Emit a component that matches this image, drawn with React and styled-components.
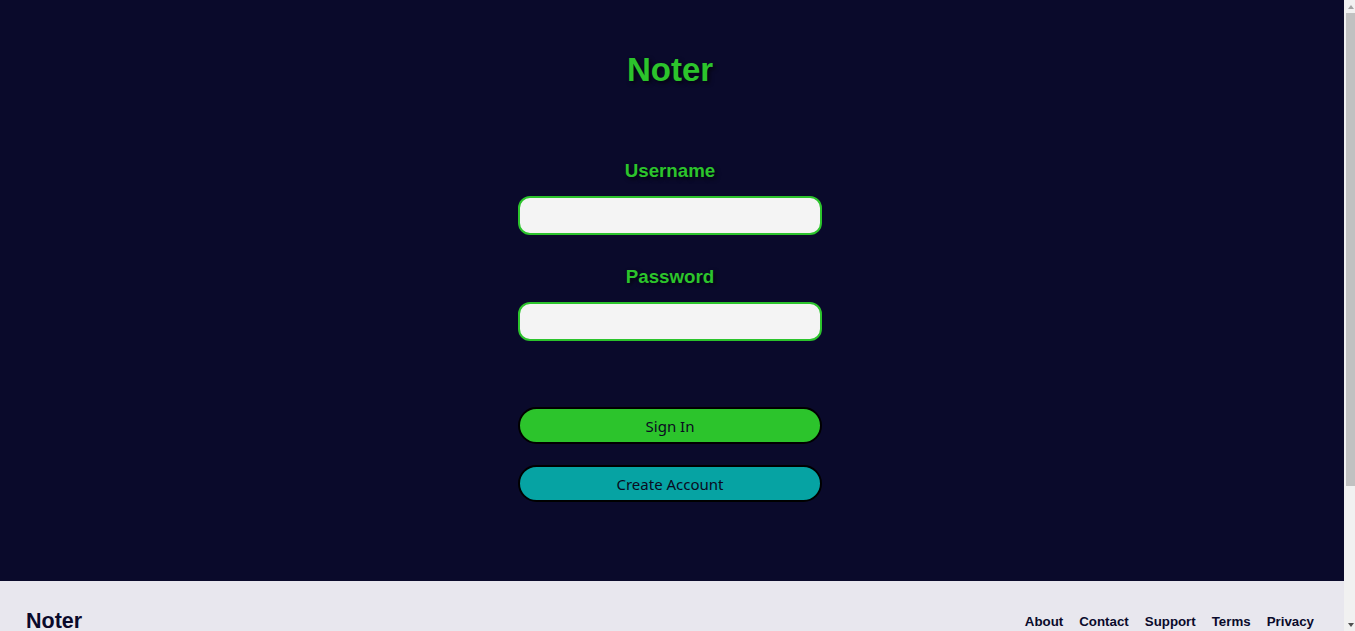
import styled, { createGlobalStyle } from "styled-components";

const GlobalStyle = createGlobalStyle`
  body {
    margin: 0;
    background-color: #0a0a2b;
    font-family: "Liberation Sans", Arial, sans-serif;
  }
`;

const Page = styled.div`
  display: flex;
  flex-direction: column;
  margin-right: 11px;
`;

const Main = styled.main`
  height: 581px;
  box-sizing: border-box;
  padding: 50px 4px 0 0;
  display: flex;
  flex-direction: column;
  align-items: center;
  background-color: #0a0a2b;
`;

const Title = styled.h1`
  margin: 0;
  font-size: 33px;
  line-height: 40px;
  color: #2cc42c;
  text-shadow: 2px 2px 4px rgba(0, 0, 0, 0.7);
`;

const Form = styled.form`
  display: flex;
  flex-direction: column;
  align-items: center;
  margin-top: 70px;
`;

const Field = styled.div`
  display: flex;
  flex-direction: column;
  align-items: center;
  gap: 14px;
  margin-bottom: ${(props) => props.$after || 0}px;
`;

const Label = styled.label`
  font-size: 18.72px;
  font-weight: bold;
  line-height: 22px;
  color: #2cc42c;
  text-shadow: 2px 2px 4px rgba(0, 0, 0, 0.7);
`;

const Input = styled.input`
  width: 304px;
  height: 39px;
  box-sizing: border-box;
  border: 2px solid #2cc42c;
  border-radius: 12px;
  background-color: #f4f4f4;
  padding: 0 12px;
  font-size: 16px;
  outline: none;
`;

const Button = styled.button`
  width: 304px;
  height: 37px;
  box-sizing: border-box;
  border: 2px solid #000;
  border-radius: 20px;
  background-color: ${(props) => props.$bg};
  color: #0a0a20;
  font-family: "Noto Sans", sans-serif;
  font-size: 15px;
  cursor: pointer;
  margin-bottom: ${(props) => props.$after || 0}px;
`;

const Footer = styled.footer`
  display: flex;
  justify-content: space-between;
  align-items: flex-start;
  background-color: #e8e7ee;
  padding: 28px 30px 175px 26px;
`;

const Brand = styled.h2`
  margin: 0;
  font-size: 21.5px;
  line-height: 24px;
  color: #0a0a2b;
`;

const Links = styled.nav`
  display: flex;
  gap: 16px;
  margin-top: 5px;
`;

const Link = styled.a`
  font-size: 13.3px;
  font-weight: bold;
  color: #0a0a2b;
  text-decoration: none;
`;

// the browser's scrollbar, shown over the right edge
const Scrollbar = styled.div`
  position: fixed;
  top: 0;
  right: 0;
  bottom: 0;
  width: 11px;
  display: flex;
  flex-direction: column;
  background-color: #f1f1f1;
`;

const Arrow = styled.div`
  height: 13px;
  display: flex;
  align-items: center;
  justify-content: center;
  padding-left: 2px;

  &::before {
    content: "";
    border-left: 3.5px solid transparent;
    border-right: 3.5px solid transparent;
    ${(props) =>
      props.$down
        ? "border-top: 4px solid #505050;"
        : "border-bottom: 4px solid #a3a3a3;"}
  }
`;

const Track = styled.div`
  flex: 1;
  padding-left: 2px;
`;

const Thumb = styled.div`
  height: 473px;
  background-color: #c1c1c1;
`;

const App = () => {
  return (
    <>
      <GlobalStyle />
      <Page>
        <Main>
          <Title>Noter</Title>
          <Form onSubmit={(e) => e.preventDefault()}>
            <Field $after={31}>
              <Label htmlFor="username">Username</Label>
              <Input id="username" type="text" />
            </Field>
            <Field $after={66}>
              <Label htmlFor="password">Password</Label>
              <Input id="password" type="password" />
            </Field>
            <Button type="submit" $bg="#2cc42c" $after={21}>
              Sign In
            </Button>
            <Button type="button" $bg="#06a3a3">
              Create Account
            </Button>
          </Form>
        </Main>
        <Footer>
          <Brand>Noter</Brand>
          <Links>
            {["About", "Contact", "Support", "Terms", "Privacy"].map((item) => (
              <Link key={item} href="#">
                {item}
              </Link>
            ))}
          </Links>
        </Footer>
      </Page>
      <Scrollbar>
        <Arrow />
        <Track>
          <Thumb />
        </Track>
        <Arrow $down />
      </Scrollbar>
    </>
  );
};

export default App;
